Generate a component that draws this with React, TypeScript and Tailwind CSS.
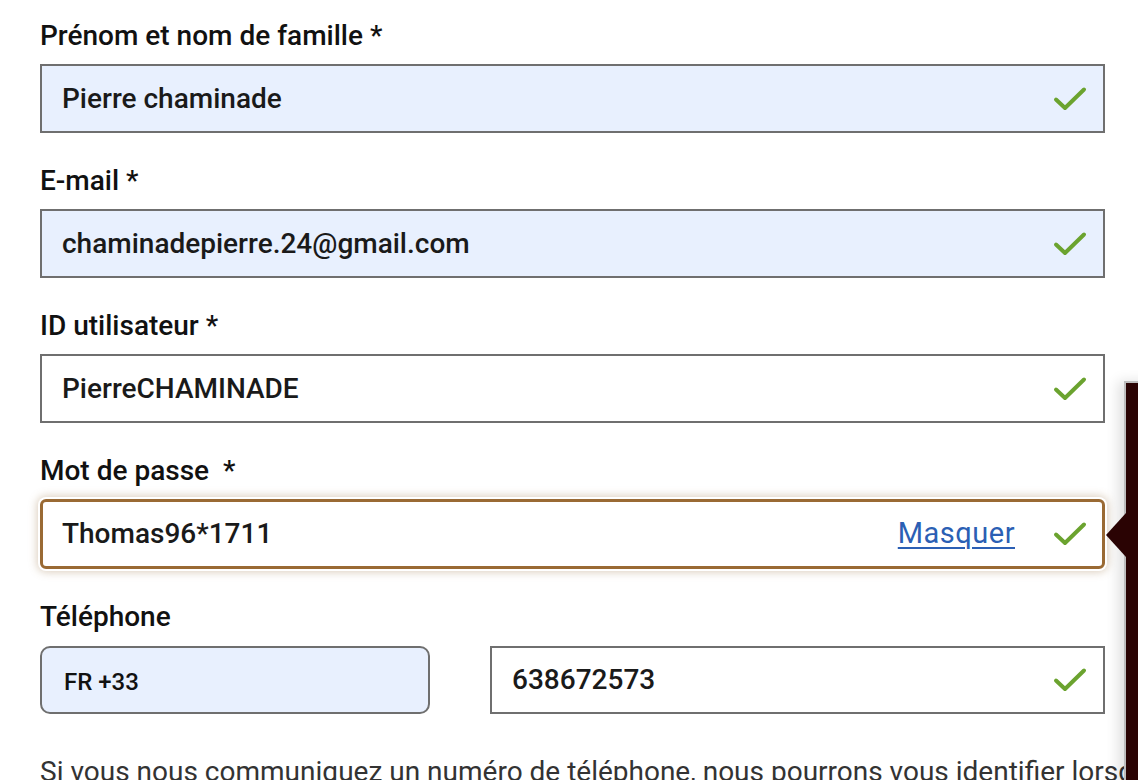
import React from "react";

function Check() {
  return (
    <svg width="34" height="26" viewBox="0 0 34 26" fill="none">
      <path d="M3 13.5 L12 22 L31 3.5" stroke="#6ba32f" strokeWidth="4" strokeLinecap="round" strokeLinejoin="round" />
    </svg>
  );
}

function Field({ label, value, filled }: { label: string; value: string; filled?: boolean }) {
  return (
    <div className="mb-8">
      <div className="text-[28px] leading-[32px] font-medium text-[#111] mb-3">{label}</div>
      <div className={`h-[69px] border-2 border-[#6f6f6f] flex items-center pl-[20px] pr-[16px] ${filled ? "bg-[#e8f0fe]" : "bg-white"}`}>
        <span className="flex-1 text-[28px] font-medium text-[#1a1a1a]">{value}</span>
        <Check />
      </div>
    </div>
  );
}

export default function App() {
  return (
    <div className="relative w-[1138px] h-[780px] overflow-hidden bg-white" style={{ fontFamily: "Roboto, 'Liberation Sans', sans-serif" }}>
      <div className="pl-10 pt-5 w-[1105px]">
        <Field label="Prénom et nom de famille *" value="Pierre chaminade" filled />
        <Field label="E-mail *" value="chaminadepierre.24@gmail.com" filled />
        <Field label="ID utilisateur *" value="PierreCHAMINADE" />
        <div className="mb-8">
          <div className="text-[28px] leading-[32px] font-medium text-[#111] mb-3 whitespace-pre">Mot de passe  *</div>
          <div className="h-[70px] border-[3px] border-[#9a6a34] rounded-[6px] flex items-center pl-[19px] pr-[15px] bg-white shadow-[0_0_0_2px_#ffffff,0_0_8px_3px_rgba(150,110,60,0.35)]">
            <span className="flex-1 text-[28px] font-medium text-[#1a1a1a]">Thomas96*1711</span>
            <span className="text-[29px] tracking-[0.5px] text-[#2b5fb4] underline underline-offset-[4px] decoration-2 mr-[38px]">Masquer</span>
            <Check />
          </div>
        </div>
        <div>
          <div className="text-[28px] leading-[32px] font-medium text-[#111] mb-[13px]">Téléphone</div>
          <div className="flex gap-[60px]">
            <div className="w-[390px] h-[68px] border-2 border-[#6f6f6f] rounded-[10px] bg-[#e8f0fe] flex items-center pl-[22px] pt-1">
              <span className="text-[24px] font-medium text-[#111]">FR +33</span>
            </div>
            <div className="flex-1 h-[68px] border-2 border-[#6f6f6f] bg-white flex items-center pl-[20px] pr-[16px]">
              <span className="flex-1 text-[28px] font-medium text-[#1a1a1a]">638672573</span>
              <Check />
            </div>
          </div>
        </div>
        <p className="mt-[42px] text-[28px] leading-[32px] text-[#333] whitespace-nowrap">
          Si vous nous communiquez un numéro de téléphone, nous pourrons vous identifier lorsque vous nous appelez.
        </p>
      </div>
      <div className="absolute left-[1124px] top-[381px] w-[40px] h-[420px] bg-[#2a0303] border-t-2 border-l-2 border-[#bdbdbd] shadow-[-6px_0_12px_rgba(0,0,0,0.12)]" />
      <div className="absolute left-[1106px] top-[513px] w-0 h-0 border-y-[22px] border-y-transparent border-r-[20px] border-r-[#2a0303]" />
    </div>
  );
}
